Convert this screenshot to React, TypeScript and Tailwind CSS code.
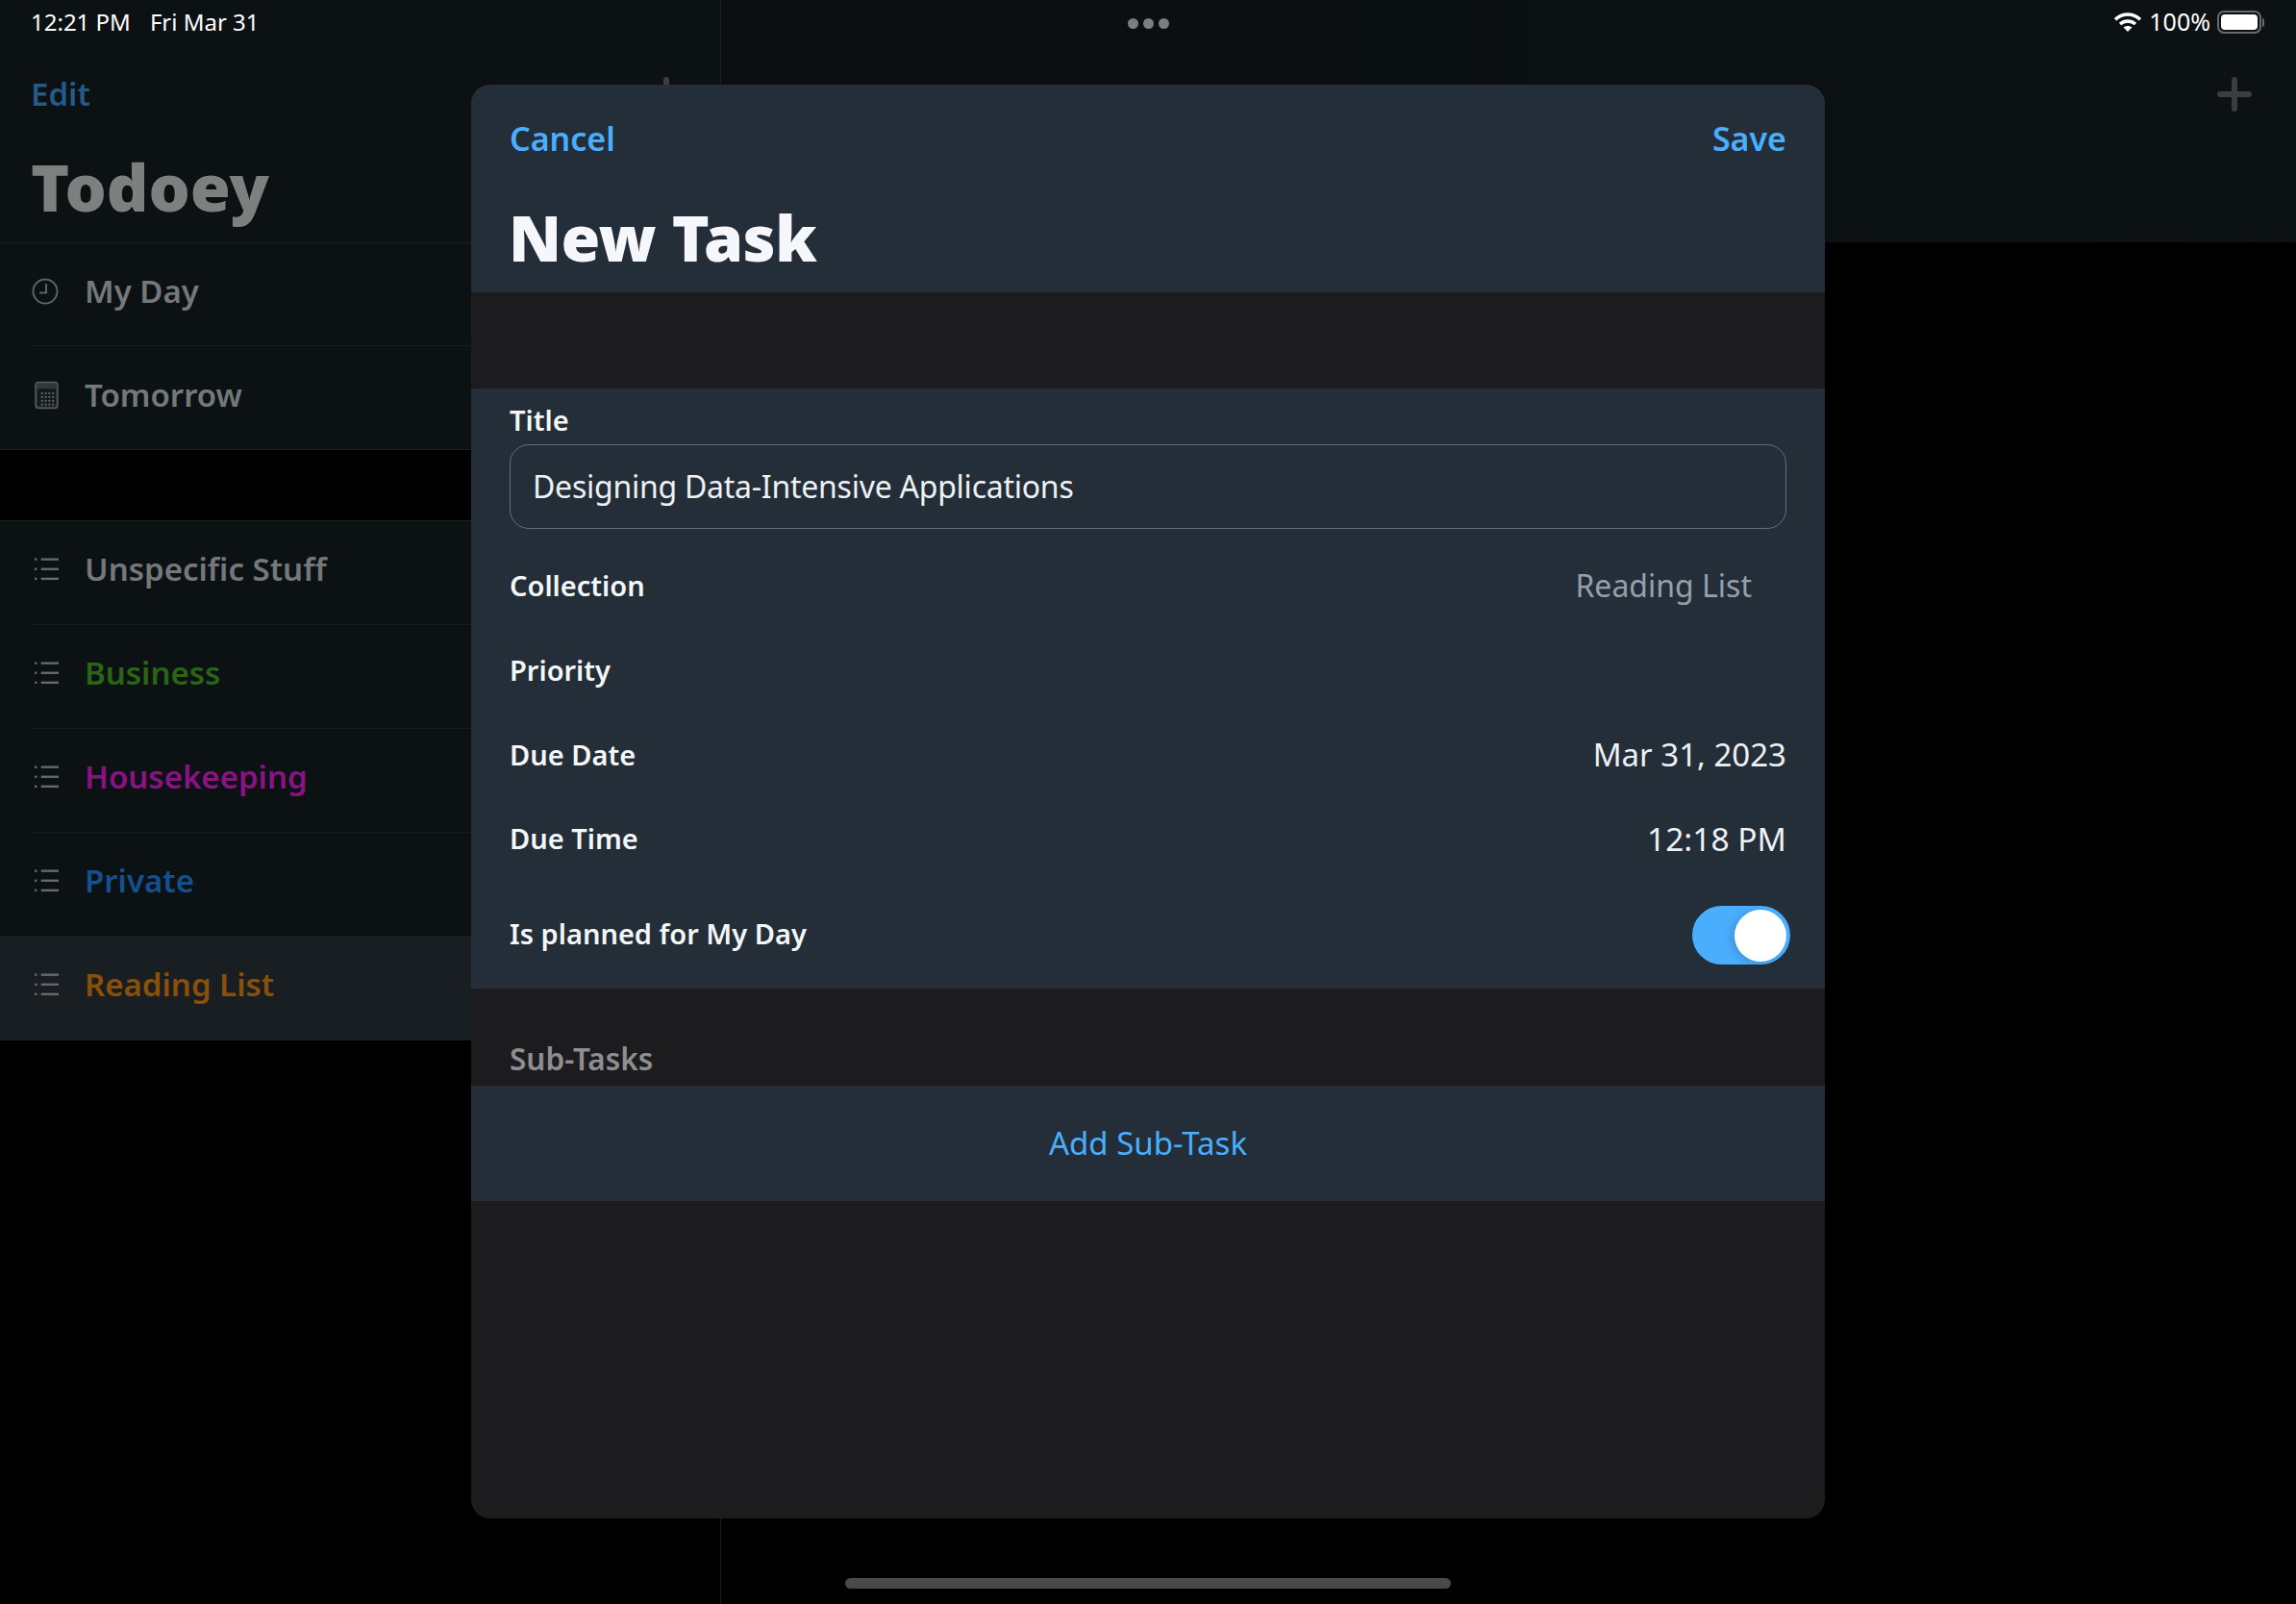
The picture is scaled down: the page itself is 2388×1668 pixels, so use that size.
const font = "[font-family:'Noto_Sans','Liberation_Sans',sans-serif]";

function ClockIcon() {
  return (
    <svg className="-ml-[3px]" width="28" height="30" viewBox="0 0 28 30" fill="none" stroke="#5d6266" strokeWidth="2">
      <circle cx="14" cy="15" r="12.5" />
      <path d="M15 7v9.5H8" />
    </svg>
  );
}

function CalendarIcon() {
  return (
    <svg width="25" height="30" viewBox="0 0 26 30" fill="none">
      <rect x="1" y="1" width="24" height="28" rx="3" fill="#33383c" stroke="#55595d" strokeWidth="1.5" />
      <rect x="3" y="8" width="20" height="19" rx="1" fill="#14191c" />
      {[12, 16, 20, 24].map((y) =>
        [7, 11, 15, 19].map((x) => <rect key={`${x}-${y}`} x={x} y={y} width="2" height="2" fill="#65696d" />),
      )}
    </svg>
  );
}

function ListIcon() {
  return (
    <svg width="25" height="26" viewBox="0 0 26 26" fill="#65696c">
      <rect x="0" y="1" width="2.5" height="2.5" />
      <rect x="0" y="11.5" width="2.5" height="2.5" />
      <rect x="0" y="22" width="2.5" height="2.5" />
      <rect x="7" y="1" width="19" height="2.5" />
      <rect x="7" y="11.5" width="19" height="2.5" />
      <rect x="7" y="22" width="19" height="2.5" />
    </svg>
  );
}

function PlusIcon() {
  return (
    <svg width="36" height="36" viewBox="0 0 36 36" stroke="#3b3d3f" strokeWidth="6" strokeLinecap="round">
      <path d="M18 3v30M3 18h30" />
    </svg>
  );
}

function WifiIcon() {
  return (
    <svg width="30" height="22" viewBox="0 0 30 22" fill="none" stroke="white" strokeWidth="3.4">
      <path d="M2 8.2C9.5 1.2 20.5 1.2 28 8.2" />
      <path d="M7 13C11.6 9 18.4 9 23 13" />
      <path d="M15 21l-4.4-4.6c2.5-2 6.3-2 8.8 0z" fill="white" stroke="none" />
    </svg>
  );
}

function Battery() {
  return (
    <div className="flex items-center">
      <div className="w-[46px] h-[24px] rounded-[7px] border-2 border-[#68696b] p-[2px]">
        <div className="w-full h-full rounded-[4px] bg-white" />
      </div>
      <div className="w-[2px] h-[9px] ml-px rounded-r bg-[#68696b]" />
    </div>
  );
}

function SideRow({ icon, label, color, h, pb, border, selected }: { icon: React.ReactNode; label: string; color: string; h: string; pb: string; border?: boolean; selected?: boolean }) {
  return (
    <div className={`${h} pl-[32px] ${selected ? "bg-[#181e22]" : ""}`}>
      <div className={`h-full flex items-center ${pb} ${border ? "border-b border-[#171c1f]" : ""}`}>
        <div className="w-[56px] pl-[4px] flex items-center">{icon}</div>
        <span className={`text-[33px] font-semibold ${color}`}>{label}</span>
      </div>
    </div>
  );
}

function FormRow({ label, value, h, valueClass }: { label: string; value?: string; h: string; valueClass?: string }) {
  return (
    <div className={`flex items-center justify-between pb-[2px] ${h}`}>
      <span className="text-[29px] font-semibold text-[#f4f6f8]">{label}</span>
      {value && <span className={valueClass}>{value}</span>}
    </div>
  );
}

export default function App() {
  return (
    <div className={`relative w-[2388px] h-[1668px] bg-black overflow-hidden ${font}`}>
      <div className="flex h-full">
        {/* sidebar */}
        <div className="w-[750px] h-full border-r border-[#1a1d1f] shrink-0">
          <div className="h-[253px] bg-[#0c1114] border-b border-[#1c2023] flex flex-col pl-[32px]">
            <div className="flex justify-between items-start pr-[38px] pt-[80px]">
              <span className="text-[33px] leading-[36px] font-semibold text-[#245a88]">Edit</span>
              <PlusIcon />
            </div>
            <span className="text-[68px] leading-[80px] mt-[38px] font-black text-[#7d807f]">Todoey</span>
          </div>
          <div className="bg-[#0c1114] border-b border-[#1c2023]">
            <SideRow icon={<ClockIcon />} label="My Day" color="text-[#75787a]" h="h-[107px]" pb="pb-[6px]" border />
            <SideRow icon={<CalendarIcon />} label="Tomorrow" color="text-[#75787a]" h="h-[107px]" pb="pb-[6px]" />
          </div>
          <div className="h-[73px]" />
          <div className="bg-[#0c1114] border-t border-[#1c2023]">
            <SideRow icon={<ListIcon />} label="Unspecific Stuff" color="text-[#75787a]" h="h-[108px]" pb="pb-[8px]" border />
            <SideRow icon={<ListIcon />} label="Business" color="text-[#2a6414]" h="h-[108px]" pb="pb-[8px]" border />
            <SideRow icon={<ListIcon />} label="Housekeeping" color="text-[#8b1283]" h="h-[108px]" pb="pb-[8px]" border />
            <SideRow icon={<ListIcon />} label="Private" color="text-[#14508f]" h="h-[107px]" pb="pb-[8px]" />
            <SideRow icon={<ListIcon />} label="Reading List" color="text-[#8a5008]" h="h-[109px]" pb="pb-[8px]" selected />
          </div>
        </div>
        {/* detail */}
        <div className="flex-1">
          <div className="h-[252px] bg-gradient-to-r from-[#0a0e0e] to-[#0c1114] flex justify-end items-start pr-[46px] pt-[80px]">
            <PlusIcon />
          </div>
        </div>
      </div>

      {/* status bar */}
      <div className="absolute top-0 left-0 right-0 h-[46px] flex items-center justify-between pl-[32px] pr-[33px] text-white">
        <div className="flex gap-[20px] text-[24px]">
          <span>12:21 PM</span>
          <span>Fri Mar 31</span>
        </div>
        <div className="absolute left-[1173px] top-[19px] flex gap-[5px]">
          <div className="w-[11px] h-[11px] rounded-full bg-[#7b7d7f]" />
          <div className="w-[11px] h-[11px] rounded-full bg-[#7b7d7f]" />
          <div className="w-[11px] h-[11px] rounded-full bg-[#7b7d7f]" />
        </div>
        <div className="flex items-center gap-[7px] text-[25px]">
          <WifiIcon />
          <span>100%</span>
          <Battery />
        </div>
      </div>

      {/* modal */}
      <div className="absolute left-[490px] top-[88px] w-[1408px] h-[1491px] rounded-[20px] overflow-hidden bg-[#1c1c1e]">
        <div className="h-[216px] bg-[#232e39] px-[40px] pt-[34px]">
          <div className="flex justify-between text-[34px] leading-[44px] font-semibold text-[#4aaeff]">
            <span>Cancel</span>
            <span>Save</span>
          </div>
          <div className="mt-[40px] -ml-px text-[66px] leading-[80px] font-black tracking-[-0.5px] text-[#f5f7fa]">New Task</div>
        </div>
        <div className="h-[100px]" />
        <div className="h-[624px] bg-[#232e39] px-[40px]">
          <div className="pt-[18px] h-[58px] text-[29px] leading-[30px] font-semibold text-[#f4f6f8]">Title</div>
          <div className="h-[88px] rounded-[20px] border border-[#5f6f7f] flex items-center pl-[23px] text-[32px] tracking-[-0.25px] text-[#eef1f4]">
            Designing Data-Intensive Applications
          </div>
          <div className="h-[16px]" />
          <FormRow label="Collection" value="Reading List" h="h-[88px]" valueClass="text-[32px] text-[#94a0ab] mr-[36px]" />
          <FormRow label="Priority" h="h-[88px]" />
          <FormRow label="Due Date" value="Mar 31, 2023" h="h-[87px]" valueClass="text-[33px] text-[#eef1f4]" />
          <FormRow label="Due Time" value="12:18 PM" h="h-[88px]" valueClass="text-[33.5px] text-[#eef1f4]" />
          <div className="flex items-center justify-between h-[111px]">
            <span className="text-[29px] pb-[3px] font-semibold text-[#f4f6f8]">Is planned for My Day</span>
            <div className="w-[102px] h-[61px] -mr-[4px] rounded-full bg-[#4aaeff] flex items-center justify-end pr-[4px]">
              <div className="w-[54px] h-[54px] rounded-full bg-white shadow-[-4px_2px_8px_rgba(0,0,0,0.15)]" />
            </div>
          </div>
        </div>
        <div className="h-[101px] px-[40px] flex items-end pb-[8px]">
          <span className="text-[31.5px] leading-[40px] font-semibold text-[#8e8e93]">Sub-Tasks</span>
        </div>
        <div className="h-[120px] bg-[#232e39] flex items-center justify-center text-[33px] text-[#4aaeff]">Add Sub-Task</div>
      </div>

      {/* home indicator */}
      <div className="absolute left-[879px] top-[1641px] w-[630px] h-[11px] rounded-full bg-[#4a4a4a]" />
    </div>
  );
}
